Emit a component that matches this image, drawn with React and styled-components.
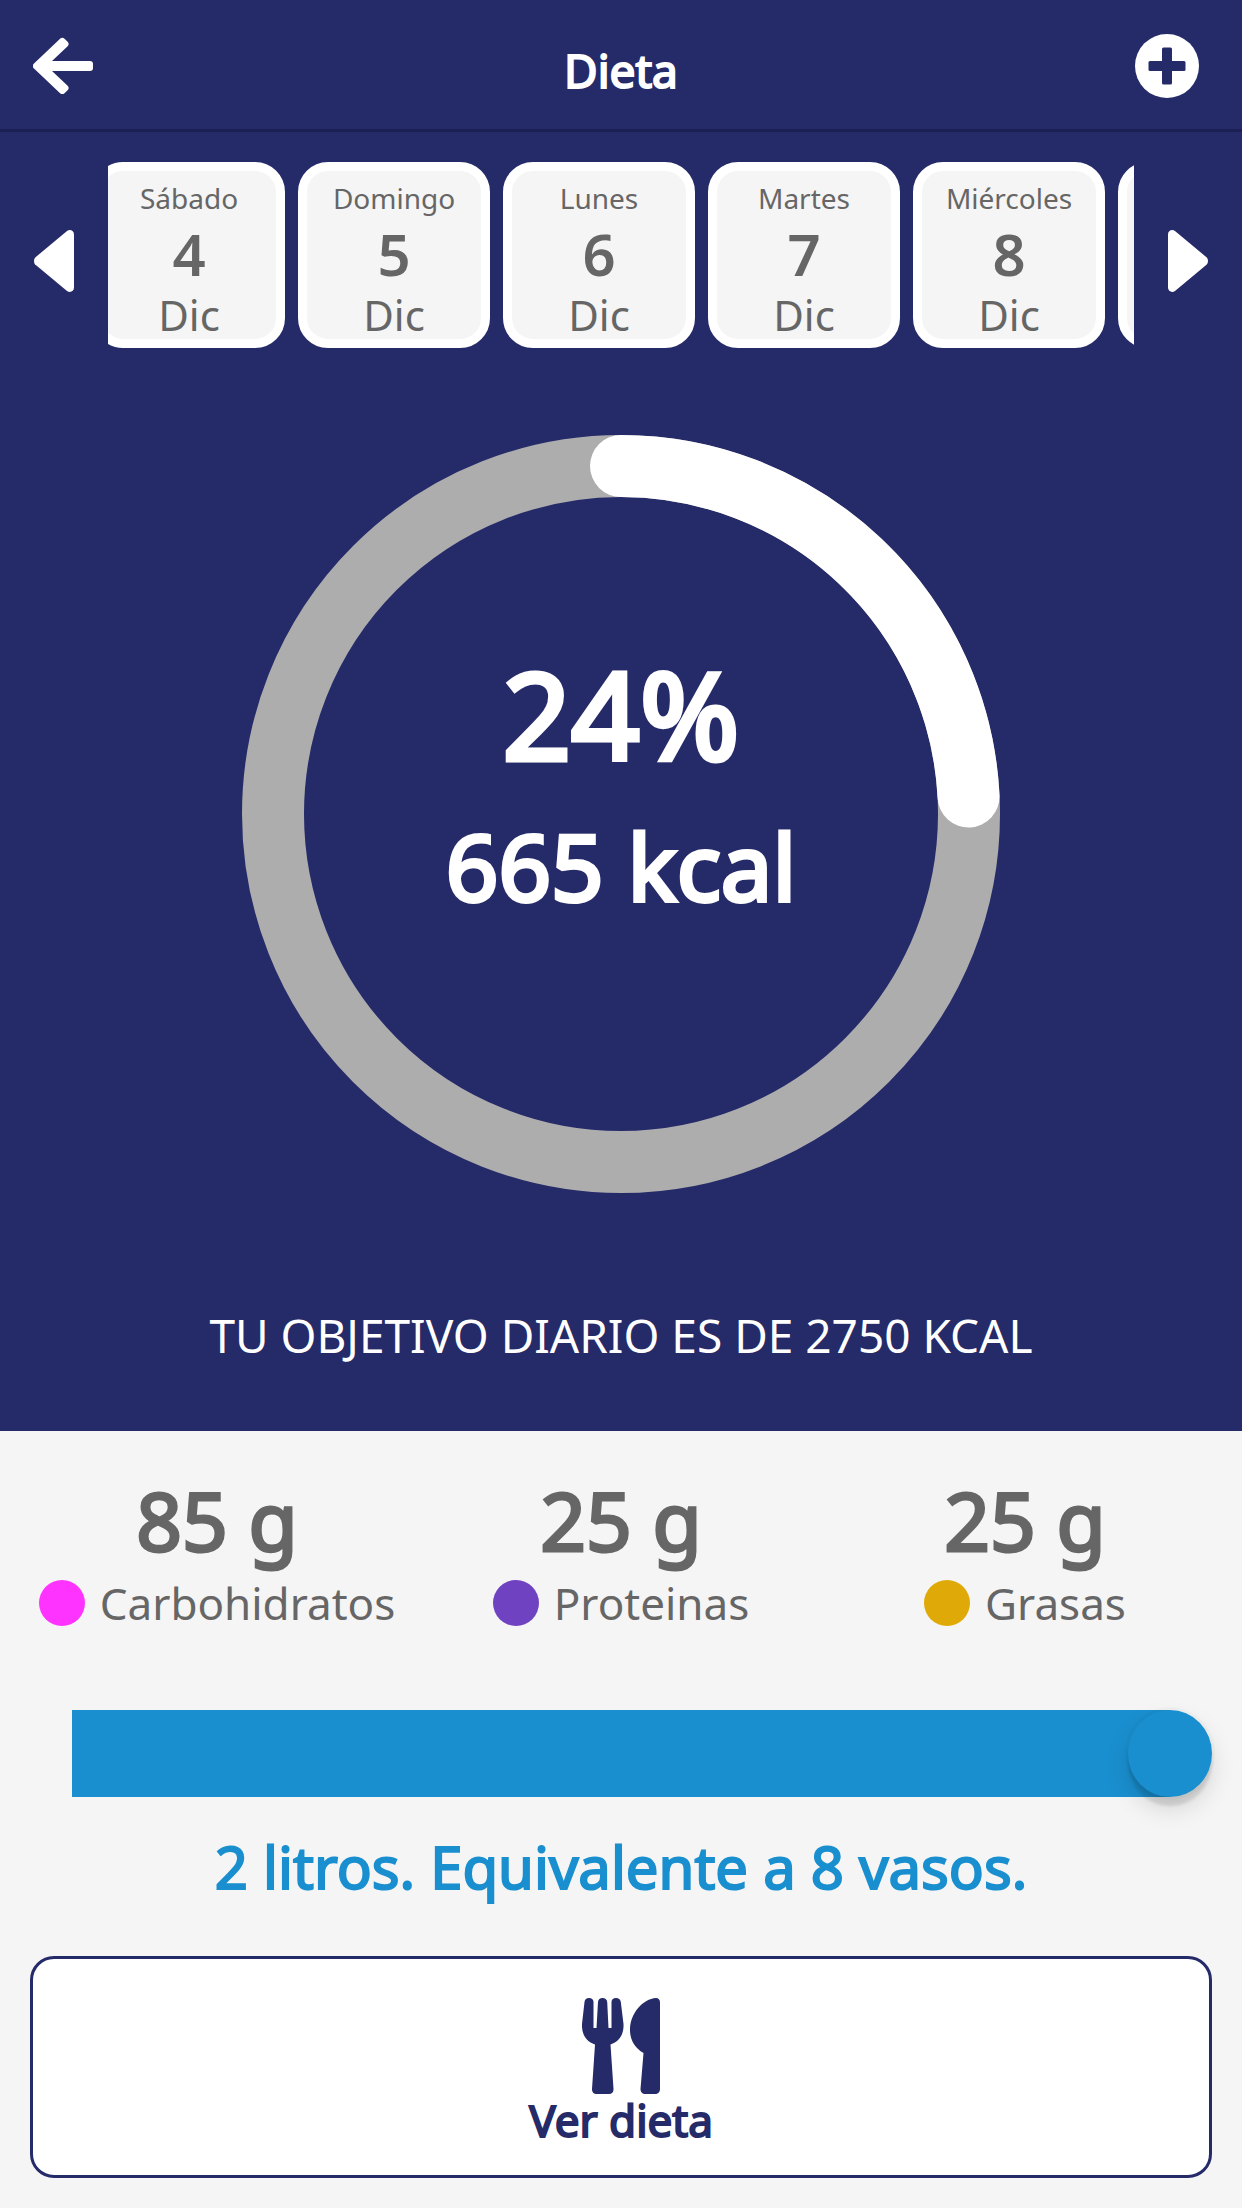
import React, { useState } from "react";
import styled, { createGlobalStyle, css } from "styled-components";

const NAVY = "#252a69";
const BLUE = "#1a8fcf";
const GREY = "#666666";
const LIGHT = "#f5f5f5";

const GlobalStyle = createGlobalStyle`
  * {
    box-sizing: border-box;
  }

  body {
    margin: 0;
    background-color: ${LIGHT};
    font-family: "Noto Sans", "Open Sans", sans-serif;
  }

  button {
    font-family: inherit;
    cursor: pointer;
  }
`;

// thicker strokes without changing the letter widths
const heavy = css`
  font-weight: 400;
  -webkit-text-stroke: ${(props) => props.$stroke || 2}px currentColor;
`;

const Page = styled.div`
  display: flex;
  flex-direction: column;
`;

const Header = styled.header`
  display: grid;
  grid-template-columns: 64px 1fr 64px;
  align-items: center;
  height: 132px;
  padding: 0 43px 0 31px;
  background-color: ${NAVY};
  border-bottom: 3px solid #1b1f53;
`;

const Title = styled.h1`
  margin: 0;
  padding: 10px 0 0 12px;
  color: #fff;
  font-size: 46px;
  line-height: 64px;
  text-align: center;
  ${heavy}
`;

const IconButton = styled.button`
  display: flex;
  align-items: center;
  justify-content: center;
  padding: 0;
  border: none;
  background: none;
`;

const ArrowButton = styled(IconButton)`
  padding-top: 12px;
`;

const Summary = styled.section`
  display: flex;
  flex-direction: column;
  align-items: center;
  padding-bottom: 64px;
  background-color: ${NAVY};
`;

const Calendar = styled.div`
  display: grid;
  grid-template-columns: 108px 1fr 108px;
  width: 100%;
  padding-top: 30px;
`;

const DayViewport = styled.div`
  overflow: hidden;
`;

const DayList = styled.div`
  display: flex;
  gap: 13px;
  margin-left: -15px;
`;

const DayCard = styled.button`
  display: flex;
  flex: none;
  flex-direction: column;
  align-items: center;
  width: 192px;
  height: 186px;
  padding: 6px 0 0;
  border: 9px solid #fff;
  border-radius: 30px;
  background-color: ${LIGHT};
  color: ${GREY};
`;

const DayName = styled.span`
  font-size: 28px;
  line-height: 42px;
`;

const DayNumber = styled.span`
  font-size: 58px;
  font-weight: 600;
  line-height: 70px;
`;

const DayMonth = styled.span`
  font-size: 42px;
  line-height: 52px;
`;

const Ring = styled.div`
  display: grid;
  place-items: center;
  margin-top: 87px;

  > * {
    grid-area: 1 / 1;
  }
`;

const RingText = styled.div`
  display: flex;
  flex-direction: column;
  align-items: center;
  padding-bottom: 56px;
  color: #fff;
`;

const Percent = styled.span`
  font-size: 120px;
  line-height: 160px;
  ${heavy}
`;

const Calories = styled.span`
  font-size: 92px;
  line-height: 144px;
  ${heavy}
`;

const Goal = styled.p`
  margin: 110px 0 0;
  color: #fff;
  font-size: 46px;
  line-height: 64px;
  text-transform: uppercase;
`;

const Details = styled.main`
  display: flex;
  flex-direction: column;
  padding: 38px 30px 30px;
`;

const Macros = styled.div`
  display: grid;
  grid-template-columns: repeat(3, 1fr);
  margin: 0 -15px;
`;

const Macro = styled.div`
  display: flex;
  flex-direction: column;
  align-items: center;
  color: ${GREY};
`;

const MacroAmount = styled.span`
  font-size: 80px;
  line-height: 102px;
  ${heavy}
`;

const MacroLabel = styled.span`
  display: flex;
  align-items: center;
  gap: 15px;
  font-size: 44px;
  line-height: 64px;
`;

const Dot = styled.span`
  width: 46px;
  height: 46px;
  border-radius: 50%;
  background-color: ${(props) => props.$color};
`;

const WaterSlider = styled.input`
  appearance: none;
  width: 100%;
  height: 87px;
  margin: 75px 0 0;
  background: linear-gradient(${BLUE}, ${BLUE}) 42px 0 no-repeat;
  outline: none;

  &::-webkit-slider-thumb {
    appearance: none;
    width: 84px;
    height: 87px;
    border-radius: 50%;
    background-color: ${BLUE};
    box-shadow: 0 9px 3px rgba(0, 0, 0, 0.1), 0 12px 24px rgba(0, 0, 0, 0.13),
      0 0 0 3px rgba(0, 0, 0, 0.02);
  }
`;

const WaterText = styled.label`
  margin-top: 28px;
  color: ${BLUE};
  font-size: 58px;
  line-height: 84px;
  text-align: center;
  ${heavy}
`;

const DietButton = styled.button`
  display: flex;
  flex-direction: column;
  align-items: center;
  height: 222px;
  margin-top: 47px;
  padding: 39px 0 0;
  border: 3px solid ${NAVY};
  border-radius: 24px;
  background-color: #fff;
  color: ${NAVY};
  font-size: 44px;
  line-height: 52px;
  ${heavy}
`;

const BackIcon = () => (
  <svg width="60" height="58" viewBox="0 -2 60 58" fill="#fff">
    <path d="M26.800 1a3.500 3.500 0 0 1 5 0l2.600 2.600a3.500 3.500 0 0 1 0 5L19 23H57a3 3 0 0 1 3 3v4a3 3 0 0 1-3 3H19l15.400 14.400a3.500 3.500 0 0 1 0 5L31.800 55a3.500 3.500 0 0 1-5 0L1 30.500a3.500 3.500 0 0 1 0-5z" />
  </svg>
);

const AddIcon = () => (
  <svg width="64" height="66" viewBox="0 -2 64 66">
    <circle cx="32" cy="32" r="32" fill="#fff" />
    <rect x="13.500" y="27" width="37" height="10" rx="1.500" fill={NAVY} />
    <rect x="27" y="13.500" width="10" height="37" rx="1.500" fill={NAVY} />
  </svg>
);

const CaretLeft = () => (
  <svg width="40" height="62" viewBox="0 0 40 62" fill="#fff">
    <path d="M40 4.500v53c0 4-4 5.500-7 3.500L1.800 35C-.6 33-.6 29 1.800 27L33 1c3-2 7-.5 7 3.500z" />
  </svg>
);

const CaretRight = () => (
  <svg width="40" height="62" viewBox="0 0 40 62" fill="#fff">
    <path d="M0 4.500v53c0 4 4 5.500 7 3.500l31.200-26c2.400-2 2.400-6 0-8L7 1C4-1 0 .5 0 4.500z" />
  </svg>
);

const CutleryIcon = () => (
  <svg width="78" height="96" viewBox="0 0 78 96" fill={NAVY}>
    <path d="M7 0C9.500 0 11.500 1.500 11.500 4v26h3L16 4c.2-2.500 2-4 4.500-4S25 1.500 25.200 4L26.500 30h3V4c0-2.500 2-4 4.500-4s4.500 1.500 4.800 4L41.500 26c.5 10-4 17.500-13 20.500L31.500 91c.2 3-1.500 5-4.500 5H14.500c-3 0-4.700-2-4.500-5L13 46.500C4 43.500-.5 36 0 26L2.500 4C2.800 1.500 4.500 0 7 0z" />
    <path d="M74 0c2.500 0 4 1.500 4 4.500V91c0 3-2 5-5 5H63.500c-3 0-5-2-5-5l3-36C53 50 48 42 48 32 48 15 61 1 74 0z" />
  </svg>
);

const ProgressRing = ({ value }) => {
  const length = 2 * Math.PI * 348;
  return (
    <svg width="758" height="758" viewBox="0 0 758 758" fill="none" strokeWidth="62">
      <circle cx="379" cy="379" r="348" stroke="#adadad" />
      <circle
        cx="379"
        cy="379"
        r="348"
        stroke="#fff"
        strokeLinecap="round"
        strokeDasharray={`${length * value} ${length}`}
        transform="rotate(-90 379 379)"
      />
    </svg>
  );
};

const days = [
  { name: "Sábado", number: 4 },
  { name: "Domingo", number: 5 },
  { name: "Lunes", number: 6 },
  { name: "Martes", number: 7 },
  { name: "Miércoles", number: 8 },
  { name: "", number: "" },
];

const macros = [
  { label: "Carbohidratos", amount: 85, color: "#ff33ff" },
  { label: "Proteinas", amount: 25, color: "#6f42c1" },
  { label: "Grasas", amount: 25, color: "#dfa908" },
];

const GOAL = 2750;
const MAX_GLASSES = 8;

const App = () => {
  const [glasses, setGlasses] = useState(8);
  const calories = 665;
  const filled = glasses / MAX_GLASSES;

  return (
    <Page>
      <GlobalStyle />
      <Header>
        <IconButton aria-label="Volver">
          <BackIcon />
        </IconButton>
        <Title>Dieta</Title>
        <IconButton aria-label="Añadir">
          <AddIcon />
        </IconButton>
      </Header>

      <Summary>
        <Calendar>
          <ArrowButton aria-label="Días anteriores">
            <CaretLeft />
          </ArrowButton>
          <DayViewport>
            <DayList>
              {days.map((day) => (
                <DayCard key={day.number}>
                  <DayName>{day.name}</DayName>
                  <DayNumber>{day.number}</DayNumber>
                  {day.name && <DayMonth>Dic</DayMonth>}
                </DayCard>
              ))}
            </DayList>
          </DayViewport>
          <ArrowButton aria-label="Días siguientes">
            <CaretRight />
          </ArrowButton>
        </Calendar>

        <Ring>
          <ProgressRing value={calories / GOAL} />
          <RingText>
            <Percent $stroke={5}>{Math.round((calories / GOAL) * 100)}%</Percent>
            <Calories $stroke={4}>{calories} kcal</Calories>
          </RingText>
        </Ring>

        <Goal>Tu objetivo diario es de {GOAL} kcal</Goal>
      </Summary>

      <Details>
        <Macros>
          {macros.map((macro) => (
            <Macro key={macro.label}>
              <MacroAmount $stroke={3}>{macro.amount} g</MacroAmount>
              <MacroLabel>
                <Dot $color={macro.color} />
                {macro.label}
              </MacroLabel>
            </Macro>
          ))}
        </Macros>

        <WaterSlider
          id="water"
          type="range"
          min="0"
          max={MAX_GLASSES}
          value={glasses}
          onChange={(e) => setGlasses(Number(e.target.value))}
          style={{ backgroundSize: `calc((100% - 84px) * ${filled}) 100%` }}
        />
        <WaterText htmlFor="water">
          {glasses / 4} litros. Equivalente a {glasses} vasos.
        </WaterText>

        <DietButton>
          <CutleryIcon />
          Ver dieta
        </DietButton>
      </Details>
    </Page>
  );
};

export default App;
